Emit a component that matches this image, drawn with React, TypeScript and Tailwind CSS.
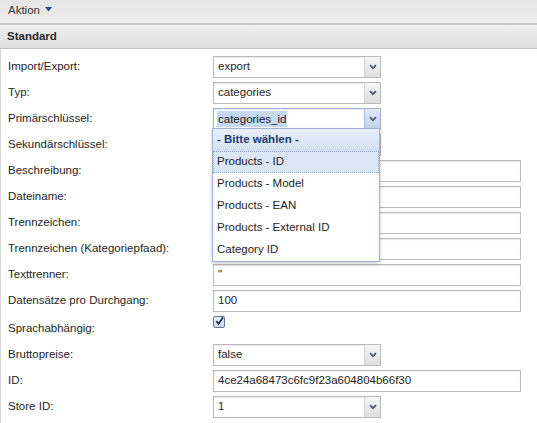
import React from "react";

function Chevron({ color = "#4b5a76" }: { color?: string }) {
  return (
    <svg width="8" height="6" viewBox="0 0 8 6">
      <path d="M1 1.2 L4 4.2 L7 1.2" fill="none" stroke={color} strokeWidth="1.8" />
    </svg>
  );
}

function Select({ value, focused = false }: { value: string; focused?: boolean }) {
  return (
    <div
      className={
        "flex h-[22px] w-[168px] border bg-white " +
        (focused ? "border-[#9db1d3]" : "border-[#b9b9b9]")
      }
    >
      <div className="flex flex-1 items-center pl-[3px] shadow-[inset_0_1px_1px_rgba(0,0,0,0.08)]">
        {focused ? (
          <span className="bg-[#c7d8f1] px-[1px] leading-[16px]">{value}</span>
        ) : (
          <span className="px-[1px]">{value}</span>
        )}
      </div>
      <div
        className={
          "flex w-[16px] items-center justify-center border-l " +
          (focused
            ? "border-[#a9bcdc] bg-gradient-to-b from-[#dfe8f6] to-[#c3d3ec]"
            : "border-[#d2d2d2] bg-gradient-to-b from-[#f6f6f6] to-[#dedede]")
        }
      >
        <Chevron />
      </div>
    </div>
  );
}

function TextInput({ value = "" }: { value?: string }) {
  return (
    <div className="flex h-[22px] w-[308px] items-center border border-[#bcbcbc] bg-white pl-[4px] shadow-[inset_0_1px_1px_rgba(0,0,0,0.08)]">
      {value}
    </div>
  );
}

function Checkbox() {
  return (
    <div className="mt-[2px] flex h-[12px] w-[12px] items-center justify-center rounded-[2px] border border-[#5f7aa3] bg-gradient-to-b from-[#eef3fa] to-[#c9d7ec]">
      <svg width="10" height="10" viewBox="0 0 10 10" className="-mt-[2px] ml-[1px]">
        <path d="M1.5 5.2 L4 8 L9 0.8" fill="none" stroke="#1c3260" strokeWidth="2" />
      </svg>
    </div>
  );
}

function Row({
  label,
  children,
  alignTop = false,
}: {
  label: string;
  children?: React.ReactNode;
  alignTop?: boolean;
}) {
  return (
    <div className="flex h-[26px] items-center">
      <div className="w-[212px] pl-[7px]">{label}</div>
      <div className={"flex h-full " + (alignTop ? "items-start" : "items-center")}>
        {children}
      </div>
    </div>
  );
}

export default function App() {
  const options = ["Products - Model", "Products - EAN", "Products - External ID", "Category ID"];
  return (
    <div
      className="relative h-[423px] w-[537px] overflow-hidden bg-white text-[11.5px] text-[#1e1e1e]"
      style={{ fontFamily: '"Liberation Sans", Arial, sans-serif' }}
    >
      <div className="flex h-[25px] items-center border-b-2 border-[#cacaca] bg-gradient-to-b from-[#e6e6e6] to-[#ececec] pl-[8px] pb-[2px] text-[#333]">
        <span>Aktion</span>
        <svg width="7" height="5" viewBox="0 0 7 5" className="ml-[5px] mb-[3px]">
          <path d="M0 0 L7 0 L3.5 4.5 Z" fill="#2d4c80" />
        </svg>
      </div>
      <div className="flex h-[24px] items-center border-b border-[#c4c4c4] bg-gradient-to-b from-[#f1f1f1] to-[#dcdcdc] pl-[7px] font-bold text-[#2a2a2a]">
        Standard
      </div>
      <div className="h-full border-l border-[#d4d4d4] pt-[5px]">
        <Row label="Import/Export:">
          <Select value="export" />
        </Row>
        <Row label="Typ:">
          <Select value="categories" />
        </Row>
        <Row label="Primärschlüssel:">
          <Select value="categories_id" focused />
        </Row>
        <Row label="Sekundärschlüssel:">
          <Select value="" />
        </Row>
        <Row label="Beschreibung:">
          <TextInput />
        </Row>
        <Row label="Dateiname:">
          <TextInput />
        </Row>
        <Row label="Trennzeichen:">
          <TextInput />
        </Row>
        <Row label="Trennzeichen (Kategoriepfaad):">
          <TextInput />
        </Row>
        <Row label="Texttrenner:">
          <TextInput value={'"'} />
        </Row>
        <Row label="Datensätze pro Durchgang:">
          <TextInput value="100" />
        </Row>
        <div className="flex h-[28px] items-center">
          <div className="w-[212px] pl-[7px] pt-[2px]">Sprachabhängig:</div>
          <div className="flex h-full items-start">
            <Checkbox />
          </div>
        </div>
        <Row label="Bruttopreise:">
          <Select value="false" />
        </Row>
        <Row label="ID:">
          <TextInput value="4ce24a68473c6fc9f23a604804b66f30" />
        </Row>
        <Row label="Store ID:">
          <Select value="1" />
        </Row>
      </div>

      <div className="absolute left-[212px] top-[128px] w-[168px] border border-[#9fb2d2] bg-white shadow-[0_2px_4px_rgba(0,0,0,0.18)]">
        <div className="flex h-[22px] items-center bg-gradient-to-b from-[#e8effa] to-[#d3e0f3] pl-[4px] font-bold text-[#1f3b6d]">
          - Bitte wählen -
        </div>
        <div className="flex h-[22px] items-center border border-dotted border-[#8ea8d2] bg-[#dbe6f6] pl-[3px]">
          Products - ID
        </div>
        {options.map((o) => (
          <div key={o} className="flex h-[22px] items-center pl-[4px]">
            {o}
          </div>
        ))}
      </div>
    </div>
  );
}
